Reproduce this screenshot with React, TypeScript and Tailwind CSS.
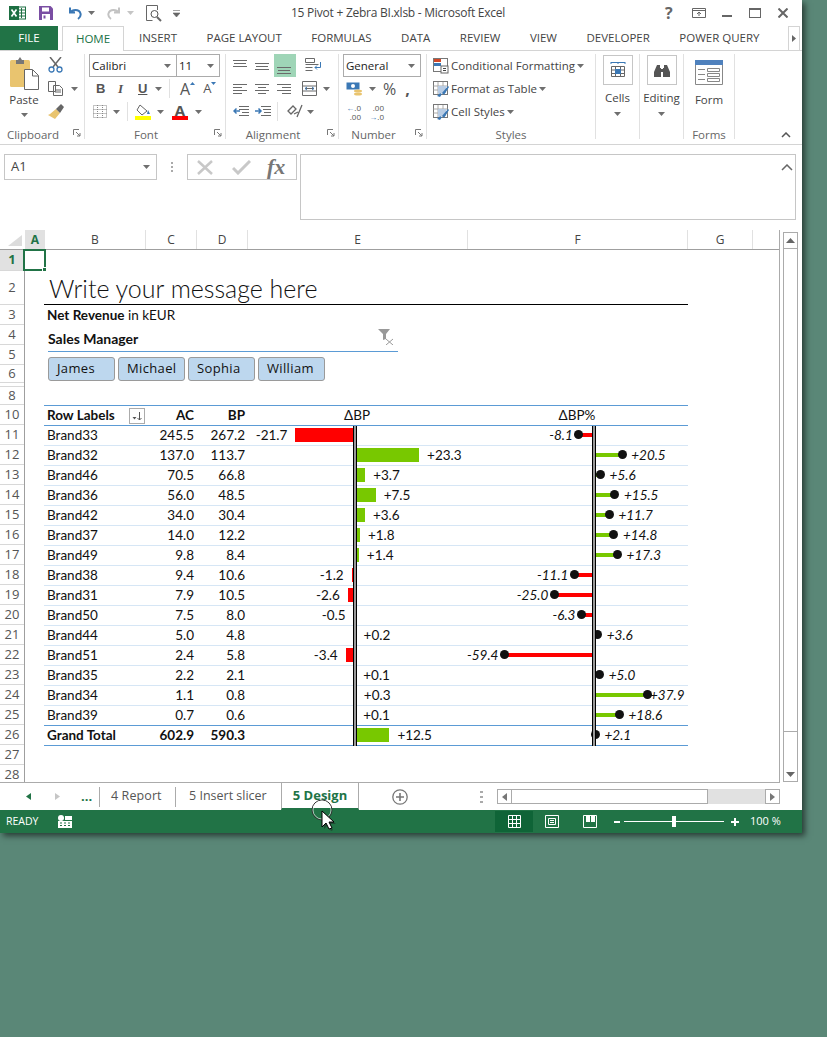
import type { ReactNode } from 'react'

const rows: [string, string, string, number, number][] = [
  ['Brand33', '245.5', '267.2', -21.7, -8.1],
  ['Brand32', '137.0', '113.7', 23.3, 20.5],
  ['Brand46', '70.5', '66.8', 3.7, 5.6],
  ['Brand36', '56.0', '48.5', 7.5, 15.5],
  ['Brand42', '34.0', '30.4', 3.6, 11.7],
  ['Brand37', '14.0', '12.2', 1.8, 14.8],
  ['Brand49', '9.8', '8.4', 1.4, 17.3],
  ['Brand38', '9.4', '10.6', -1.2, -11.1],
  ['Brand31', '7.9', '10.5', -2.6, -25.0],
  ['Brand50', '7.5', '8.0', -0.5, -6.3],
  ['Brand44', '5.0', '4.8', 0.2, 3.6],
  ['Brand51', '2.4', '5.8', -3.4, -59.4],
  ['Brand35', '2.2', '2.1', 0.1, 5.0],
  ['Brand34', '1.1', '0.8', 0.3, 37.9],
  ['Brand39', '0.7', '0.6', 0.1, 18.6],
]

const rowHeaders: [string, string][] = [
  ['1', 'h-[21px]'], ['2', 'h-[34px]'], ['3', 'h-[20px]'], ['4', 'h-[20px]'], ['5', 'h-[20px]'], ['6', 'h-[18px]'],
  ['', 'h-[4px]'], ['8', 'h-[18px]'], ['10', 'h-[20px]'],
  ...Array.from({ length: 18 }, (_, i): [string, string] => [String(i + 11), 'h-[20px]']),
]

const fmt = (v: number) => (v > 0 ? '+' : '') + v.toFixed(1)

function Caret({ className = '' }: { className?: string }) {
  return (
    <svg width="7" height="4" viewBox="0 0 7 4" className={`shrink-0 ${className}`}>
      <path d="M0 0h7L3.5 4z" fill="#6f6f6f" />
    </svg>
  )
}

function Launcher() {
  return (
    <svg width="8" height="8" viewBox="0 0 8 8" className="absolute right-[3px] top-[-1px]">
      <path d="M.5 6V.5H6M3 3l4 4M4 7h3V4" fill="none" stroke="#777" />
    </svg>
  )
}

function Group({ label, width, launcher, children }: { label: string; width: string; launcher?: boolean; children: ReactNode }) {
  return (
    <div className={`${width} relative flex shrink-0 flex-col border-r border-[#e1e1e1] h-[85px]`}>
      <div className="h-[76px] flex">{children}</div>
      <div className={`relative h-[9px] flex items-center justify-center text-[11.5px] text-[#666] leading-none ${launcher ? 'pr-[18px]' : ''}`}>
        {label}
        {launcher && <Launcher />}
      </div>
    </div>
  )
}

function Combo({ text, width }: { text: string; width: string }) {
  return (
    <div className={`${width} h-[23px] border border-[#ababab] flex items-center justify-between pl-[2px] pr-[5px] text-[11.5px] text-[#222]`}>
      {text}
      <Caret />
    </div>
  )
}

function Lines({ ys, xs }: { ys: number[]; xs: [number, number][] }) {
  return (
    <svg width="16" height="16" viewBox="0 0 16 16" fill="none" stroke="#6a6a6a">
      {ys.map((y, i) => (
        <path key={y} d={`M${xs[i][0]} ${y + 0.5}H${xs[i][1]}`} />
      ))}
    </svg>
  )
}

function TitleBar() {
  return (
    <div className="h-[26px] flex items-center relative text-[12px] text-[#444]">
      <svg width="17" height="14" viewBox="0 0 17 14" className="ml-[9px]">
        <rect x="6" y="1" width="10.500" height="12" fill="#fff" stroke="#1d6f42" />
        <path d="M9 4h7M9 7h7M9 10h7M12.500 2v10" stroke="#1d6f42" />
        <rect y="0" width="10" height="14" fill="#1d6f42" />
        <path d="M2.500 3.500l5 7M7.500 3.500l-5 7" stroke="#fff" strokeWidth="1.700" />
      </svg>
      <svg width="14" height="14" viewBox="0 0 14 14" className="ml-[13px]">
        <path d="M0 0h11.500L14 2.500V14H0z" fill="#7a4ea3" />
        <rect x="3" y="1.500" width="7" height="4" fill="#fff" />
        <rect x="3" y="8" width="8" height="6" fill="#fff" />
        <rect x="4.500" y="9.500" width="2" height="3" fill="#7a4ea3" />
      </svg>
      <svg width="15" height="14" viewBox="0 0 15 14" className="ml-[14px]" fill="none">
        <path d="M3 1.500v5h5M3.500 6.500C5 3.500 12 2.500 13.500 7.500c.6 2.500-1 4.500-2.500 5.500" stroke="#3b78b5" strokeWidth="2" />
      </svg>
      <Caret className="ml-[6px]" />
      <svg width="15" height="14" viewBox="0 0 15 14" className="ml-[12px]" fill="none">
        <path d="M12 1.500v5H7M11.500 6.500C10 3.500 3 2.500 1.500 7.500c-.6 2.500 1 4.500 2.500 5.500" stroke="#c3c3c3" strokeWidth="2" />
      </svg>
      <Caret className="ml-[5px] opacity-40" />
      <svg width="16" height="17" viewBox="0 0 16 17" className="ml-[12px]" fill="none" stroke="#666">
        <path d="M11.500 5V.5H.5v15h6" />
        <circle cx="8.500" cy="9" r="3.500" stroke="#555" />
        <path d="M11 12l4 4" strokeWidth="2" />
      </svg>
      <svg width="7" height="7" viewBox="0 0 7 7" className="ml-[11px]">
        <path d="M0 .5h7M0 3h7L3.500 7z" fill="#666" stroke="#666" strokeWidth=".6" />
      </svg>
      <span className="ml-[111px] text-[12px] tracking-[-0.25px]">15 Pivot + Zebra BI.xlsb - Microsoft Excel</span>
      <div className="absolute left-[665px] top-0 h-full flex items-center">
        <span className="w-[8px] text-[16px] font-bold text-[#666]">?</span>
        <svg width="14" height="10" viewBox="0 0 14 10" className="ml-[19px]" fill="none" stroke="#666">
          <path d="M.5.500h13v9H.5zM1 2.500h12M7 8V4M5 6l2-2 2 2" />
        </svg>
        <span className="ml-[16px] w-[10px] h-[2px] bg-[#666] mt-[6px]" />
        <span className="ml-[17px] w-[12px] h-[10px] border border-[#666] border-t-[2px]" />
        <svg width="10" height="10" viewBox="0 0 10 10" className="ml-[17px]" stroke="#666" strokeWidth="2">
          <path d="M.5.500l9 9M9.500.500l-9 9" />
        </svg>
      </div>
    </div>
  )
}

function Tabs() {
  const names = ['INSERT', 'PAGE LAYOUT', 'FORMULAS', 'DATA', 'REVIEW', 'VIEW', 'DEVELOPER', 'POWER QUERY']
  return (
    <div className="h-[25px] flex relative text-[11.5px] text-[#444] border-b border-[#d4d4d4]">
      <div className="w-[58px] bg-[#217346] text-white flex items-center justify-center">FILE</div>
      <div className="ml-[4px] w-[62px] h-[25px] bg-white border border-b-0 border-[#d4d4d4] text-[#217346] flex items-center justify-center">HOME</div>
      <div className="ml-[15px] flex items-center gap-[29.5px] whitespace-nowrap">
        {names.map((n) => (
          <span key={n}>{n}</span>
        ))}
      </div>
      <div className="absolute left-[788px] top-0 w-[12px] h-[25px] bg-white border border-[#d4d4d4] flex items-center justify-center">
        <svg width="4" height="7" viewBox="0 0 4 7"><path d="M0 0l4 3.500L0 7z" fill="#666" /></svg>
      </div>
    </div>
  )
}

function ClipboardGroup() {
  return (
    <Group label="Clipboard" width="w-[85px]" launcher>
      <div className="w-[48px] flex flex-col items-center pt-[3px]">
        <svg width="29" height="33" viewBox="0 0 29 33" className="ml-[1px]">
          <rect x="0" y="3" width="20" height="27" rx="1.500" fill="#e9c46f" />
          <path d="M6 3h2l2-3 2 3h2v4H6z" fill="#777" />
          <path d="M14.500 12.500h8l6 6v14h-14z" fill="#fff" stroke="#666" />
          <path d="M22.500 13v6h6" fill="none" stroke="#666" />
        </svg>
        <span className="text-[11.5px] text-[#444] mt-[3px] leading-[14px]">Paste</span>
        <Caret className="mt-[6px]" />
      </div>
      <div className="flex flex-col pt-[3px] gap-[8px]">
        <svg width="15" height="16" viewBox="0 0 15 16" fill="none">
          <path d="M2 0l8 10M13 0L5 10" stroke="#666" strokeWidth="1.500" />
          <circle cx="3.500" cy="12.500" r="2.500" stroke="#3b78b5" strokeWidth="1.300" />
          <circle cx="11.500" cy="12.500" r="2.500" stroke="#3b78b5" strokeWidth="1.300" />
        </svg>
        <div className="flex items-center gap-[8px]">
          <svg width="15" height="15" viewBox="0 0 15 15" fill="#fff" stroke="#666">
            <path d="M.5.500h7v10h-7zM5.500 4.500h6l3 3v7h-9z" />
            <path d="M7 9h6M7 11h6" />
          </svg>
          <Caret />
        </div>
        <svg width="16" height="15" viewBox="0 0 16 15">
          <path d="M8 5l4 4-5 6-7-4 2-1z" fill="#e9c46f" />
          <path d="M8 5l5-5 3 3-4 6z" fill="#666" />
        </svg>
      </div>
    </Group>
  )
}

function FontGroup() {
  return (
    <Group label="Font" width="w-[141px]" launcher>
      <div className="pl-[4px] flex flex-col">
        <div className="flex">
          <Combo text="Calibri" width="w-[88px]" />
          <Combo text="11" width="w-[44px] -ml-px" />
        </div>
        <div className="h-[23px] flex items-center text-[#555] text-[13px]">
          <span className="ml-[7px] w-[8px] font-bold font-['Liberation_Sans',sans-serif]">B</span>
          <span className="ml-[14px] w-[8px] italic font-bold font-['Liberation_Serif',serif]">I</span>
          <span className="ml-[12px] w-[10px] underline font-bold font-['Liberation_Sans',sans-serif]">U</span>
          <Caret className="ml-[7px]" />
          <span className="ml-[7px] w-px h-[19px] bg-[#e1e1e1]" />
          <span className="ml-[10px] text-[16px] leading-none">A</span>
          <svg width="5" height="3" viewBox="0 0 5 3" className="mb-[10px]"><path d="M0 3h5L2.500 0z" fill="#3b78b5" /></svg>
          <span className="ml-[8px] text-[13px] leading-none">A</span>
          <svg width="5" height="3" viewBox="0 0 5 3" className="mb-[10px]"><path d="M0 0h5L2.500 3z" fill="#3b78b5" /></svg>
        </div>
        <div className="h-[23px] flex items-center">
          <svg width="14" height="13" viewBox="0 0 14 13" className="ml-[4px]" fill="none" stroke="#888" strokeDasharray="1 1">
            <path d="M.5.500h13v12H.5zM.5 4.500h13M.5 8.500h13M4.500 0v13M9.500 0v13" />
          </svg>
          <Caret className="ml-[6px]" />
          <span className="ml-[7px] w-px h-[19px] bg-[#e1e1e1]" />
          <div className="ml-[7px] w-[16px] flex flex-col">
            <svg width="16" height="12" viewBox="0 0 16 12">
              <path d="M5 1l7 6-5 4-5-5z" fill="#fff" stroke="#666" />
              <path d="M13 6l2 4h-3z" fill="#3b78b5" />
            </svg>
            <span className="h-[4px] w-[16px] bg-[#ffff00]" />
          </div>
          <Caret className="ml-[6px]" />
          <div className="ml-[8px] w-[16px] flex flex-col items-center">
            <span className="text-[15px] leading-[12px] text-[#555] font-bold">A</span>
            <span className="h-[4px] w-[16px] bg-[#ff0000]" />
          </div>
          <Caret className="ml-[7px]" />
        </div>
      </div>
    </Group>
  )
}

function AlignmentGroup() {
  const third: [number, number][] = [[0, 14], [1, 13], [0, 14]]
  return (
    <Group label="Alignment" width="w-[113px]" launcher>
      <div className="pl-[7px] flex flex-col">
        <div className="flex items-center h-[23px] gap-[6px]">
          <Lines ys={[2, 5, 8]} xs={third} />
          <Lines ys={[5, 8, 11]} xs={third} />
          <div className="w-[22px] h-[23px] -ml-[3px] bg-[#9fd5b7] flex items-center justify-center">
            <Lines ys={[9, 12, 15]} xs={third} />
          </div>
          <svg width="17" height="15" viewBox="0 0 17 15" className="ml-[3px]" fill="none" stroke="#6a6a6a">
            <path d="M.5.500h9v4H.5zM.5 6.500h13M.5 9.500h7M.5 12.500h7" />
            <path d="M15.500 4v5.500H10M12 7.500l-2 2 2 2" stroke="#3b78b5" />
          </svg>
        </div>
        <div className="flex items-center h-[23px] gap-[6px]">
          <Lines ys={[3, 6, 9, 12]} xs={[[0, 14], [0, 9], [0, 14], [0, 9]]} />
          <Lines ys={[3, 6, 9, 12]} xs={[[0, 14], [3, 11], [0, 14], [3, 11]]} />
          <Lines ys={[3, 6, 9, 12]} xs={[[0, 14], [5, 14], [0, 14], [5, 14]]} />
          <svg width="15" height="15" viewBox="0 0 15 15" className="ml-[3px]" fill="none" stroke="#6a6a6a">
            <path d="M.5.500h14v14H.5zM.5 5h14M.5 10h14M3 7.500h9" />
            <path d="M5 6l-2 1.500L5 9M10 6l2 1.500L10 9" stroke="#3b78b5" />
          </svg>
          <Caret />
        </div>
        <div className="flex items-center h-[23px] gap-[6px]">
          <svg width="16" height="13" viewBox="0 0 16 13" fill="none" stroke="#6a6a6a">
            <path d="M6 1.500h10M6 4.500h10M9 7.500h7M6 10.500h10" />
            <path d="M7 6H1M3.500 3.500L1 6l2.500 2.500" stroke="#3b78b5" strokeWidth="1.500" />
          </svg>
          <svg width="16" height="13" viewBox="0 0 16 13" fill="none" stroke="#6a6a6a">
            <path d="M6 1.500h10M8 4.500h8M9 7.500h7M6 10.500h10" />
            <path d="M0 6h6M3.500 3.500L6 6 3.500 8.500" stroke="#3b78b5" strokeWidth="1.500" />
          </svg>
          <span className="w-px h-[19px] bg-[#e1e1e1]" />
          <svg width="16" height="15" viewBox="0 0 16 15" className="ml-[3px]" fill="none" stroke="#666" strokeWidth="1.300">
            <path d="M1 7l5-5 3 3-5 5zM7 10l4-2M15 1l-5 12" />
          </svg>
          <Caret className="-ml-[2px]" />
        </div>
      </div>
    </Group>
  )
}

function NumberGroup() {
  return (
    <Group label="Number" width="w-[88px]" launcher>
      <div className="pl-[4px] flex flex-col">
        <Combo text="General" width="w-[78px]" />
        <div className="h-[23px] flex items-center text-[#555]">
          <svg width="17" height="14" viewBox="0 0 17 14" className="ml-[3px]">
            <rect x=".5" y=".5" width="13" height="7" fill="#3b78b5" />
            <circle cx="7" cy="4" r="2" fill="#fff" />
            <ellipse cx="12" cy="9" rx="4" ry="1.500" fill="#e9c46f" />
            <ellipse cx="12" cy="12" rx="4" ry="1.500" fill="#e9c46f" />
          </svg>
          <Caret className="ml-[6px]" />
          <span className="ml-[7px] text-[16px] leading-none">%</span>
          <span className="ml-[9px] text-[16px] font-bold leading-none">,</span>
        </div>
        <div className="h-[23px] flex items-center text-[#555] text-[8px] leading-[9px]">
          <div className="ml-[3px] w-[15px] whitespace-nowrap text-right"><span className="text-[#3b78b5]">←</span>.0<br />.00</div>
          <div className="ml-[8px] w-[15px] whitespace-nowrap text-right">.00<br /><span className="text-[#3b78b5]">→</span>.0</div>
        </div>
      </div>
    </Group>
  )
}

function StyleIcon({ kind }: { kind: number }) {
  return (
    <svg width="16" height="16" viewBox="0 0 16 16" className="shrink-0">
      <rect x=".5" y=".5" width="14" height="13" fill="#fff" stroke="#777" />
      {kind === 0 ? (
        <>
          <rect x="1" y="1" width="7" height="3" fill="#d24726" />
          <rect x="1" y="5" width="7" height="3" fill="#3b78b5" />
          <rect x="8" y="8" width="7" height="7" fill="#fff" stroke="#666" />
          <path d="M10 10.500h3M10 12.500h3" stroke="#444" />
        </>
      ) : (
        <>
          <path d="M.5 5h14M.5 9h14M5 1v12M10 1v12" stroke="#aaa" />
          <rect x="5" y="5" width="8" height="7" fill="#b8cce4" />
          <path d="M4 15l3-3 2 1-2 3zM9 12l6-7 1 1-5 8z" fill="#3b78b5" />
        </>
      )}
    </svg>
  )
}

function StylesGroup() {
  const items = ['Conditional Formatting', 'Format as Table', 'Cell Styles']
  return (
    <Group label="Styles" width="w-[169px]">
      <div className="pl-[6px] flex flex-col text-[11.5px] text-[#444] tracking-[0.03px]">
        {items.map((t, i) => (
          <div key={t} className="h-[23px] flex items-center gap-[2px]">
            <StyleIcon kind={i === 0 ? 0 : 1} />
            <span className="whitespace-nowrap">{t}</span>
            <Caret />
          </div>
        ))}
      </div>
    </Group>
  )
}

function BigButton({ label, width, children }: { label: string; width: string; children: ReactNode }) {
  return (
    <Group label="" width={width}>
      <div className="w-full flex flex-col items-center pt-px">
        <div className="w-[30px] h-[30px] border border-[#c6c6c6] flex items-center justify-center">{children}</div>
        <span className="mt-[6px] text-[11.5px] text-[#444] leading-[14px]">{label}</span>
        <Caret className="mt-[7px]" />
      </div>
    </Group>
  )
}

function Ribbon() {
  return (
    <div className="h-[94px] border-b border-[#d4d4d4] pt-[3px] flex relative">
      <ClipboardGroup />
      <FontGroup />
      <AlignmentGroup />
      <NumberGroup />
      <StylesGroup />
      <BigButton label="Cells" width="w-[44px]">
        <svg width="16" height="17" viewBox="0 0 16 17" fill="none" stroke="#666">
          <path d="M1 .500h14M1 0v2M8 0v2M15 0v2" stroke="#3b78b5" />
          <path d="M1.500 4.500h13v10h-13zM1.500 8h13M1.500 11.500h13M5.500 4.500v10M10.500 4.500v10" />
          <rect x="5" y="7" width="6" height="5" fill="#3b78b5" stroke="none" />
        </svg>
      </BigButton>
      <BigButton label="Editing" width="w-[44px]">
        <svg width="16" height="13" viewBox="0 0 16 13" fill="#555">
          <path d="M3 1h3v3h1v9H0V8zM13 1h-3v3H9v9h7V8z" />
          <rect x="7" y="5" width="2" height="3" />
        </svg>
      </BigButton>
      <Group label="Forms" width="w-[51px]">
        <div className="w-full flex flex-col items-center pt-[6px]">
          <svg width="28" height="25" viewBox="0 0 28 25" fill="none" stroke="#888">
            <path d="M.5.500h27v24H.5z" />
            <rect width="28" height="5" fill="#4f81bd" stroke="none" />
            <path d="M3 9.500h7M3 14.500h7M3 19.500h7M12.500 8.500h12v3h-12zM12.500 13.500h12v3h-12zM12.500 18.500h12v3h-12z" />
          </svg>
          <span className="mt-[8px] text-[11.5px] text-[#444] leading-[14px]">Form</span>
        </div>
      </Group>
      <svg width="10" height="6" viewBox="0 0 10 6" className="absolute left-[781px] top-[81px]" fill="none" stroke="#555" strokeWidth="1.500">
        <path d="M1 5l4-4 4 4" />
      </svg>
    </div>
  )
}

function FormulaBar() {
  return (
    <div className="h-[66px] mt-[9px] flex pl-[4px] text-[12px] text-[#444]">
      <div className="w-[153px] h-[26px] border border-[#c6c6c6] flex items-center justify-between pl-[6px] pr-[6px] text-[13px]">
        A1
        <Caret />
      </div>
      <div className="w-[30px] h-[26px] flex items-center justify-center">
        <span className="w-[2px] h-[10px] border-y-[2px] border-[#aaa] relative after:absolute after:left-0 after:top-[2px] after:w-[2px] after:h-[2px] after:bg-[#aaa]" />
      </div>
      <div className="w-[110px] h-[26px] border border-[#c6c6c6] flex items-center pl-[9px]">
        <svg width="17" height="15" viewBox="0 0 17 15" stroke="#c8c8c8" strokeWidth="2.500"><path d="M1 1l14 13M15 1L1 14" /></svg>
        <svg width="19" height="15" viewBox="0 0 19 15" className="ml-[18px]" stroke="#c8c8c8" strokeWidth="3" fill="none"><path d="M1 8l5 5L18 1" /></svg>
        <span className="ml-[16px] text-[22px] leading-none italic font-bold text-[#777] font-['Liberation_Serif',serif]">fx</span>
      </div>
      <div className="ml-[3px] w-[496px] h-[66px] border border-[#c6c6c6] flex justify-end pr-[2px] pt-[9px]">
        <svg width="12" height="7" viewBox="0 0 12 7" fill="none" stroke="#666" strokeWidth="1.500"><path d="M1 6l5-5 5 5" /></svg>
      </div>
    </div>
  )
}

function ColumnHeaders() {
  const cols: [string, string][] = [['B', 'w-[101px]'], ['C', 'w-[51px]'], ['D', 'w-[51px]'], ['E', 'w-[220px]'], ['F', 'w-[220px]'], ['G', 'w-[65px]']]
  return (
    <div className="h-[20px] flex border-b border-[#9f9f9f] text-[12px] text-[#444] font-['Open_Sans',sans-serif]">
      <div className="w-[25px] relative border-r border-transparent">
        <svg width="14" height="11" viewBox="0 0 14 11" className="absolute left-[8px] top-[5px]"><path d="M14 0v11H0z" fill="#dcdcdc" /></svg>
      </div>
      <div className="w-[20px] bg-[#e1e1e1] text-[#217346] font-bold flex items-center justify-center">A</div>
      {cols.map(([c, w]) => (
        <div key={c} className={`${w} flex items-center justify-center border-r border-[#e1e1e1]`}>{c}</div>
      ))}
    </div>
  )
}

function RowHeaders() {
  return (
    <div className="w-[25px] shrink-0 border-r border-[#9f9f9f] text-[13px] text-[#555] font-['Open_Sans',sans-serif]">
      {rowHeaders.map(([n, h], i) => (
        <div
          key={i}
          className={`${h} flex items-center justify-center border-b border-[#d8d8d8] ${n === '1' ? 'bg-[#e1e1e1] text-[#217346] font-bold' : ''}`}
        >
          {n}
        </div>
      ))}
    </div>
  )
}

function Axis({ left }: { left: string }) {
  return <div className={`${left} absolute top-0 -bottom-px w-[4px] border-x border-black bg-[#999] z-10`} />
}

function DeltaCell({ v }: { v: number }) {
  const w = Math.abs(v) * 2.75
  const pos = v > 0
  return (
    <div className="w-[220px] relative">
      <div
        className={`absolute top-[2px] h-[14px] ${pos ? 'bg-[#78c800]' : 'bg-[#ff0000]'}`}
        style={pos ? { left: 108, width: w } : { left: 108 - w, width: w }}
      />
      <span
        className="absolute top-0 leading-[19px]"
        style={pos ? { left: 108 + w + 8 } : { right: 220 - (108 - w - 8) }}
      >
        {fmt(v)}
      </span>
      <Axis left="left-[106px]" />
    </div>
  )
}

function PercentCell({ v }: { v: number }) {
  const pos = v > 0
  const c = pos ? 126.5 + 1.45 * v - 1 : 123.5 + 1.45 * v
  return (
    <div className="w-[220px] relative italic">
      <div
        className={`absolute top-[7px] h-[4px] ${pos ? 'bg-[#78c800]' : 'bg-[#ff0000]'}`}
        style={pos ? { left: 127, width: c - 127 } : { left: c, width: 126 - c }}
      />
      <div className="absolute top-[4px] w-[9px] h-[9px] rounded-full bg-[#111] z-0" style={{ left: c - 4.5 }} />
      <span className="absolute top-0 leading-[19px]" style={pos ? { left: Math.min(c + 9, 183) } : { right: 220 - (c - 6) }}>
        {fmt(v)}
      </span>
      <Axis left="left-[125px]" />
    </div>
  )
}

function SortButton() {
  return (
    <div className="absolute right-0 top-[2px] w-[16px] h-[16px] border border-[#ababab] bg-white flex items-center justify-center">
      <svg width="10" height="9" viewBox="0 0 10 9" fill="none" stroke="#555">
        <path d="M7.500 0v8M5.500 6l2 2 2-2" />
        <path d="M.5 5h4L2.500 7.500z" fill="#555" stroke="none" />
      </svg>
    </div>
  )
}

function Table() {
  return (
    <div className="w-[644px] border-t border-t-[#5b9bd5] text-[13.5px] text-[#111]">
      <div className="h-[20px] flex items-center border-b border-b-[#5b9bd5]">
        <div className="w-[101px] pl-[3px] font-bold relative h-full flex items-center">
          Row Labels
          <SortButton />
        </div>
        <div className="w-[51px] pr-[2px] text-right font-bold">AC</div>
        <div className="w-[51px] pr-[2px] text-right font-bold">BP</div>
        <div className="w-[220px] text-center">ΔBP</div>
        <div className="w-[220px] text-center">ΔBP%</div>
      </div>
      {rows.map(([name, ac, bp, d, p], i) => (
        <div key={name} className={`h-[20px] flex border-b ${i === rows.length - 1 ? 'border-b-[#5b9bd5]' : 'border-b-[#d6e6f5]'}`}>
          <div className="w-[101px] pl-[3px] leading-[19px]">{name}</div>
          <div className="w-[51px] pr-[2px] text-right leading-[19px]">{ac}</div>
          <div className="w-[51px] pr-[2px] text-right leading-[19px]">{bp}</div>
          <DeltaCell v={d} />
          <PercentCell v={p} />
        </div>
      ))}
      <div className="h-[20px] flex border-b border-b-[#5b9bd5]">
        <div className="w-[101px] pl-[3px] leading-[19px] font-bold">Grand Total</div>
        <div className="w-[51px] pr-[2px] text-right leading-[19px] font-bold">602.9</div>
        <div className="w-[51px] pr-[2px] text-right leading-[19px] font-bold">590.3</div>
        <DeltaCell v={12.5} />
        <PercentCell v={2.1} />
      </div>
    </div>
  )
}

function Slicer() {
  const people = ['James', 'Michael', 'Sophia', 'William']
  return (
    <div className="h-[80px] pl-[4px] text-[#111]">
      <div className="w-[350px] h-[27px] border-b border-b-[#5b9bd5] flex items-center justify-between pr-[4px]">
        <span className="font-bold text-[14px]">Sales Manager</span>
        <svg width="16" height="16" viewBox="0 0 16 16" className="-mt-[2px]">
          <path d="M0 0h12L8 5v5l-3 1V5z" fill="#999" />
          <path d="M8 10l7 6M15 10l-7 6" stroke="#999" />
        </svg>
      </div>
      <div className="flex gap-[3px] mt-[5px]">
        {people.map((p) => (
          <div
            key={p}
            className="w-[67px] h-[24px] rounded-[3px] bg-[#bdd7ee] border border-[#9a9a9a] flex items-center pl-[8px] text-[13px] tracking-[0.35px] font-['Open_Sans',sans-serif]"
          >
            {p}
          </div>
        ))}
      </div>
    </div>
  )
}

function Sheet() {
  return (
    <div className="mt-[10px] h-[553px] flex shrink-0 overflow-hidden">
      <div className="w-[780px] h-[553px] border-r border-b border-[#ababab] overflow-hidden relative font-['Lato',sans-serif]">
        <ColumnHeaders />
        <div className="flex">
          <RowHeaders />
          <div className="pl-[19px] relative">
            <div className="absolute left-[-2px] top-[-1px] w-[23px] h-[22px] border-2 border-[#217346]">
              <span className="absolute -right-[3px] -bottom-[3px] w-[5px] h-[5px] bg-[#217346] border border-white" />
            </div>
            <div className="h-[21px]" />
            <div className="w-[644px] h-[34px] border-b border-black pl-[5px] text-[25px] font-light leading-[34px] text-[#111]">Write your message here</div>
            <div className="h-[20px] pl-[3px] text-[13.5px] text-[#111] leading-[20px]"><b>Net Revenue</b> in kEUR</div>
            <Slicer />
            <Table />
          </div>
        </div>
      </div>
      <div className="ml-[3px] w-[15px] h-[550px] mt-[2px] border border-[#ababab] flex flex-col items-center relative">
        <svg width="9" height="5" viewBox="0 0 9 5" className="mt-[5px]"><path d="M0 5h9L4.500 0z" fill="#666" /></svg>
        <div className="absolute left-[-1px] top-[15px] w-[15px] h-[484px] border border-[#ababab] bg-white" />
        <svg width="9" height="5" viewBox="0 0 9 5" className="absolute bottom-[4px]"><path d="M0 0h9L4.500 5z" fill="#666" /></svg>
      </div>
    </div>
  )
}

function SheetTabs() {
  return (
    <div className="h-[27px] flex items-center text-[13px] text-[#555] relative">
      <svg width="5" height="7" viewBox="0 0 5 7" className="ml-[26px]"><path d="M5 0L0 3.500 5 7z" fill="#217346" /></svg>
      <svg width="5" height="7" viewBox="0 0 5 7" className="ml-[24px]"><path d="M0 0l5 3.500L0 7z" fill="#c6c6c6" /></svg>
      <span className="ml-[21px] w-[13px] font-bold text-[#217346] leading-none">...</span>
      <span className="ml-[5px] h-[20px] w-px bg-[#ababab]" />
      <span className="ml-[11px] w-[64px] whitespace-nowrap text-[12.5px] tracking-[0.1px]">4 Report</span>
      <span className="h-[20px] w-px bg-[#ababab]" />
      <span className="ml-[13px] w-[92px] whitespace-nowrap text-[12.5px]">5 Insert slicer</span>
      <div className="w-[78px] h-[27px] border-x border-[#ababab] border-b-2 border-b-[#217346] font-bold text-[#217346] flex items-center justify-center">5 Design</div>
      <svg width="16" height="16" viewBox="0 0 16 16" className="ml-[33px]" fill="none" stroke="#777">
        <circle cx="8" cy="8" r="7.200" strokeWidth="1.300" />
        <path d="M8 4v8M4 8h8" strokeWidth="1.600" />
      </svg>
      <div className="ml-[72px] w-[3px] flex flex-col gap-[3px]">
        <span className="h-[2px] bg-[#aaa]" />
        <span className="h-[2px] bg-[#aaa]" />
        <span className="h-[2px] bg-[#aaa]" />
      </div>
      <div className="ml-[14px] w-[283px] h-[15px] flex bg-[#e1e1e1]">
        <div className="w-[15px] border border-[#ababab] bg-white flex items-center justify-center">
          <svg width="5" height="8" viewBox="0 0 5 8"><path d="M5 0L0 4l5 4z" fill="#777" /></svg>
        </div>
        <div className="w-[196px] border border-l-0 border-[#ababab] bg-white" />
        <div className="ml-[57px] w-[15px] border border-[#ababab] bg-white flex items-center justify-center">
          <svg width="5" height="8" viewBox="0 0 5 8"><path d="M0 0l5 4-5 4z" fill="#777" /></svg>
        </div>
      </div>
    </div>
  )
}

function StatusBar() {
  return (
    <div className="h-[23px] bg-[#217346] flex items-center text-white text-[10.5px]">
      <span className="ml-[6px] w-[52px]">READY</span>
      <svg width="14" height="13" viewBox="0 0 14 13" fill="#fff">
        <circle cx="3" cy="3" r="3" />
        <rect x="7" y="1" width="7" height="4" />
        <rect x="0" y="6" width="14" height="7" />
        <path d="M2 8h2M6 8h2M10 8h2M2 10.500h2M6 10.500h2M10 10.500h2" stroke="#217346" />
      </svg>
      <div className="ml-[423px] w-[38px] h-[21px] bg-[#0f6437] flex items-center justify-center">
        <svg width="13" height="13" viewBox="0 0 13 13" fill="none" stroke="#fff"><path d="M.5.500h12v12H.5zM.5 4.500h12M.5 8.500h12M4.500 0v13M8.500 0v13" /></svg>
      </div>
      <svg width="14" height="13" viewBox="0 0 14 13" className="ml-[12px]" fill="none" stroke="#fff"><path d="M.5.500h13v12H.5zM3.500 3.500h7v6h-7zM5 5.500h4M5 7.500h4" /></svg>
      <svg width="14" height="13" viewBox="0 0 14 13" className="ml-[24px]" fill="none" stroke="#fff">
        <path d="M.5.500h13v12H.5z" />
        <rect x="3" y="1" width="4" height="6" fill="#fff" stroke="none" />
        <rect x="8" y="1" width="4" height="6" fill="#fff" stroke="none" />
      </svg>
      <span className="ml-[17px] w-[6px] h-[2px] bg-white" />
      <div className="ml-[4px] w-[100px] h-px bg-white relative">
        <span className="absolute left-[48px] -top-[5px] w-[4px] h-[11px] bg-white" />
      </div>
      <svg width="8" height="8" viewBox="0 0 8 8" className="ml-[7px]" stroke="#fff" strokeWidth="2"><path d="M0 4h8M4 0v8" /></svg>
      <span className="ml-[11px] text-[11px] whitespace-nowrap">100 %</span>
    </div>
  )
}

function MouseCursor() {
  return (
    <svg width="34" height="40" viewBox="0 0 34 40" className="absolute left-[305px] top-[797px] z-20">
      <circle cx="17" cy="13" r="10" fill="none" stroke="#333" />
      <circle cx="17" cy="13" r="9" fill="none" stroke="#fff" strokeOpacity=".6" />
      <path d="M19 16v16l4-4 3 6 2-1-3-6h6z" fill="#222" opacity=".5" />
      <path d="M17 14v16l4-4 3 6 3-1-3-6h5z" fill="#fff" stroke="#000" strokeWidth="1" />
    </svg>
  )
}

export default function App() {
  return (
    <div className="h-[1037px] w-[827px] bg-[#5a8777] overflow-hidden relative font-['Open_Sans',sans-serif]">
      <div className="w-[802px] h-[833px] bg-white flex flex-col shadow-[3px_3px_6px_rgba(0,0,0,0.55)]">
        <TitleBar />
        <Tabs />
        <Ribbon />
        <FormulaBar />
        <Sheet />
        <SheetTabs />
        <StatusBar />
      </div>
      <MouseCursor />
    </div>
  )
}
